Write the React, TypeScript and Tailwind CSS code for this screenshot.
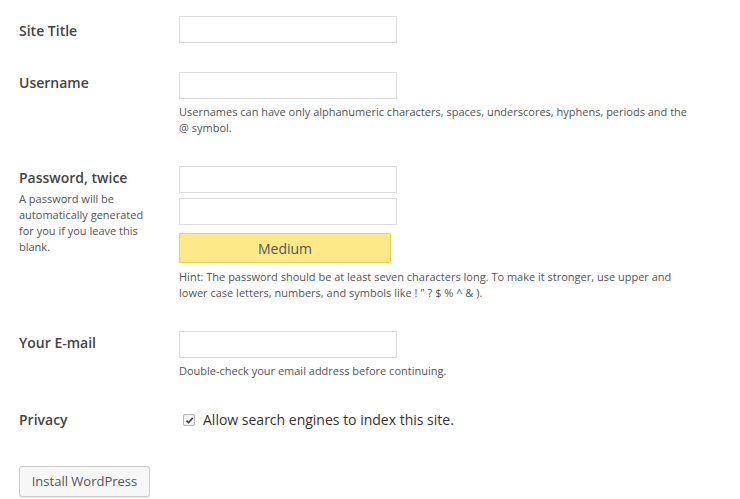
import React from 'react';

const font = { fontFamily: '"Open Sans", "Noto Sans", sans-serif' };

function Field({ className = '' }: { className?: string }) {
  return (
    <input
      type="text"
      className={`block w-[218px] h-[27px] border border-[#dddddd] bg-white px-[6px] text-[13px] text-[#333] outline-none ${className}`}
    />
  );
}

function Label({ children, className = '' }: { children: React.ReactNode; className?: string }) {
  return (
    <div className={`text-[14px] leading-[20px] font-semibold text-[#444] ${className}`}>{children}</div>
  );
}

export default function App() {
  return (
    <div className="bg-white w-[740px] h-[499px] overflow-hidden pl-[19px]" style={font}>
      {/* Site Title */}
      <div className="flex pt-[16px]">
        <div className="w-[160px] shrink-0">
          <Label className="mt-[5px]">Site Title</Label>
        </div>
        <Field />
      </div>

      {/* Username */}
      <div className="flex mt-[29px]">
        <div className="w-[160px] shrink-0">
          <Label className="mt-[1px]">Username</Label>
        </div>
        <div>
          <Field />
          <p className="mt-[5px] w-[520px] text-[11px] leading-[16px] text-[#555]">
            Usernames can have only alphanumeric characters, spaces, underscores, hyphens, periods and the @ symbol.
          </p>
        </div>
      </div>

      {/* Password */}
      <div className="flex mt-[30px]">
        <div className="w-[160px] shrink-0 pr-[26px]">
          <Label className="mt-[2px]">Password, twice</Label>
          <p className="mt-[3px] text-[11px] leading-[16px] text-[#555]">
            A password will be automatically generated for you if you leave this blank.
          </p>
        </div>
        <div>
          <Field />
          <Field className="mt-[5px]" />
          <div className="mt-[8px] w-[212px] h-[30px] border border-[#f2d14b] bg-[#fde98a] flex items-center justify-center text-[14px] text-[#555]">
            Medium
          </div>
          <p className="mt-[6px] w-[520px] text-[11px] leading-[16px] text-[#555]">
            Hint: The password should be at least seven characters long. To make it stronger, use upper and lower case
            letters, numbers, and symbols like ! " ? $ % ^ &amp; ).
          </p>
        </div>
      </div>

      {/* Email */}
      <div className="flex mt-[30px]">
        <div className="w-[160px] shrink-0">
          <Label className="mt-[2px]">Your E-mail</Label>
        </div>
        <div>
          <Field />
          <p className="mt-[5px] text-[11px] leading-[16px] text-[#555]">
            Double-check your email address before continuing.
          </p>
        </div>
      </div>

      {/* Privacy */}
      <div className="flex mt-[31px] items-center">
        <div className="w-[160px] shrink-0">
          <Label>Privacy</Label>
        </div>
        <label className="flex items-center gap-[8px] pl-[4px] text-[14px] leading-[20px] text-[#333]">
          <span className="w-[12px] h-[12px] border border-[#b4b4b4] rounded-[2px] bg-[#f2f2f2] flex items-center justify-center">
            <svg viewBox="0 0 12 12" className="w-[9px] h-[9px]">
              <path d="M2 6.2 L4.8 9 L10.2 2.6" fill="none" stroke="#333" strokeWidth="2" />
            </svg>
          </span>
          Allow search engines to index this site.
        </label>
      </div>

      {/* Submit */}
      <button className="mt-[36px] w-[131px] h-[31px] border border-[#cccccc] rounded-[3px] bg-[#f7f7f7] shadow-[0_1px_0_#e5e5e5] text-[13px] text-[#555]">
        Install WordPress
      </button>
    </div>
  );
}
